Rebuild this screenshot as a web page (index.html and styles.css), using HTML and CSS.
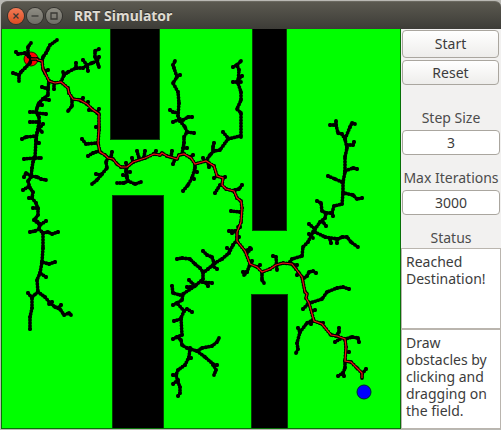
FILE: index.html
```html
<!DOCTYPE html>
<html lang="en">
<head>
<meta charset="utf-8">
<title>RRT Simulator</title>
<link rel="stylesheet" href="styles.css">
</head>
<body>
<div class="window">
  <header class="titlebar">
    <button class="control close" type="button" aria-label="Close"><svg viewBox="0 0 16 16"><path d="M5.5 5.5l5 5M10.5 5.5l-5 5"/></svg></button>
    <button class="control" type="button" aria-label="Minimize"><svg viewBox="0 0 16 16"><path d="M4.5 8h7"/></svg></button>
    <button class="control" type="button" aria-label="Maximize"><svg viewBox="0 0 16 16"><path d="M5 5h6v6H5z"/></svg></button>
    <h1 class="title">RRT Simulator</h1>
  </header>
  <main class="content">
    <svg class="field" viewBox="1 29 400 400" role="img" aria-label="Search tree on the field">
      <defs>
        <marker id="node" viewBox="0 0 4 4" refX="2" refY="2" markerWidth="4" markerHeight="4" markerUnits="userSpaceOnUse"><circle cx="2" cy="2" r="1.9"/></marker>
        <path id="tree" d="
          M42 61L43 57L46 53L48 49L50 45L57 40
          M31 59L28 54L28 47L31 43M16 52L18 54L25 53L31 59L30 63L25 68L21 72L19 75L19 81M13 73L19 75
          M61 82L64 75L63 72M64 75L68 72L76 68L83 68L87 65L92 63L97 61L95 57L95 51L99 49
          M76 63V68M83 60L87 65L88 71M99 57L97 61L99 67L98 64
          M48 70L44 71M54 89V83M42 87L48 89
          M49 81L48 88L48 95L43 99L39 103L37 108L36 112L39 117L39 123L37 133L36 140L35 157L33 162L32 168L31 177L28 181L30 188L33 192L32 198L36 203L38 209L38 215L35 219L40 224L39 229L43 233L43 248L42 262L40 273L37 280L38 292L32 297L32 308L30 317L30 329
          M49 100L43 99M30 112H36M46 114L37 113M42 105H38M72 99L72 106L68 111M83 98L81 101M88 102L87 104M99 109L97 113
          M30 122H39M43 124L39 129L42 132M22 139L26 137L36 136M39 143L36 141M24 159L34 158L41 158
          M24 177L26 173L31 176L37 177L41 179L46 180M23 190L28 187M29 198H32M33 208H38M46 221L40 225L34 220
          M30 232L35 231L39 229M58 232L52 234L48 232L43 233M55 262L49 264L42 262M46 277L40 273
          M28 293L32 298M38 292L45 297L50 303L55 307L60 309L64 315L69 313L71 315M52 302L49 304M61 305L58 308
          M82 139L86 144L97 143M88 156L93 153L99 151M96 127H99M89 110H92M112 152L111 157
          M108 158L106 162L107 168L102 174L97 180L92 184M96 174L101 175
          M126 163L127 167L126 170L127 178L128 181L124 183L117 183M128 181L135 184L141 182M130 172H126M123 175L127 176
          M132 158L133 162M137 151L139 158M145 151L144 157M156 151L154 154M172 151L171 157M173 164L175 159
          M182 154L184 143L184 137L187 132L185 127L180 121L178 116L179 103L178 92L173 83L177 77L174 68L173 65L175 61
          M180 75L177 76M170 110L173 112L178 113M173 122L180 119M192 117L188 117L183 120L180 121M194 133L187 132M187 148H183M193 155L190 157
          M206 161L210 155L214 151L220 150L228 139L240 136L241 137L241 113L237 109L241 100L241 92L238 83L239 70L237 65L241 61
          M233 67L237 65M242 76L238 80M233 82H241M223 132L228 138M214 143L213 147L213 151
          M203 158L205 161M209 167L208 162M195 164L195 168L192 178L188 185L183 191M197 172L195 171M194 179L192 178
          M215 193L220 185M225 177L223 178M214 178L217 176M242 185L239 189L235 190M231 211L240 212M229 231L236 231M232 233L236 231M240 227H238M239 237H237M250 248L246 251
          M237 240L233 245L229 253L222 259L215 263L208 269L203 273L203 279L195 286L183 294L182 300L177 303L184 311L181 318L182 335L177 337L181 340L182 345L187 348L197 351L202 348L212 346L217 342L219 338
          M197 351L205 357L213 364L216 370L214 375M217 365H213
          M190 348L189 357L185 365L178 370L176 375L178 382L180 387L180 393L178 396M178 380L173 384M173 375H176M191 358H189
          M203 251L207 255L212 257L214 263M177 259L182 258L190 259L195 264L200 268L203 272M217 269L213 266M227 248L230 250
          M212 283L202 282M208 286L206 283M189 280L193 284M187 287H191M172 286L173 293L180 295M173 305L177 303M192 312L187 309L184 311M174 321L181 319M173 339L177 337
          M251 249L247 253M252 261L250 264L247 272L244 275M243 272H247M262 272L262 280L264 283M260 265L258 267M273 256L276 257L277 270
          M290 262L292 259L302 256L303 247L308 242L313 232L320 222L325 218L326 213L332 213L334 206L342 204L343 193L343 182L345 172L345 157L347 148L345 139L350 127L352 123L355 124
          M345 139L342 134L338 133L336 125L330 125M336 125V121M354 142L353 145L347 145M357 169L353 168L345 171M328 176L335 179L342 182
          M362 198L357 199L353 195L344 193M317 201L321 203L322 211L326 213M333 216L332 213M326 226L323 222M309 224L315 229
          M315 232L325 237L338 239L342 237L347 237L351 242L358 247M331 243L330 239M337 243V239M309 234L313 238
          M297 265L293 265M297 275L299 273M316 273L313 271L309 272L307 276L303 279
          M349 289L343 287L337 288L327 292L322 299L310 303M303 309L308 304M315 310L312 311
          M313 320L307 323L300 332L297 343L298 349L296 353M298 328L300 332M323 323H320M311 324L312 321
          M339 328L339 332L336 336M335 342L340 339M359 342L358 338L352 337L345 339M349 352H346
          M345 361L345 368L343 373L338 376M344 376L343 373M366 369L362 374"/>
        <path id="route" d="M31 59L37 59L38 60L42 61L43 69L45 73L49 81L55 83L61 82L68 88L69 93L73 99L80 100L87 104L92 109L99 114L99 130L98 143L100 152L105 155L108 158L113 159L117 164L121 167L127 167L133 162L145 158L154 154L160 155L162 153L167 156L177 159L179 155L184 154L191 158L195 164L206 161L214 166L217 176L223 178L222 185L226 189L234 191L237 198L241 201L242 208L241 222L237 232L237 241L245 251L250 264L257 267L262 272L270 269L276 265L283 263L292 264L296 269L302 277L305 292L307 294L306 298L309 303L314 321L322 324L331 335L337 336L345 339L346 347L345 361L351 362L357 368L362 373L362 378"/>
      </defs>
      <rect class="ground" x="1" y="29" width="400" height="400"/>
      <g class="obstacles">
        <rect x="110.5" y="28.5" width="49" height="111"/>
        <rect x="112.5" y="195.5" width="51" height="234"/>
        <rect x="252.5" y="28.5" width="34" height="202"/>
        <rect x="251.5" y="294.5" width="36" height="135"/>
      </g>
      <rect class="edge" x="1.5" y="28.5" width="399" height="400"/>
      <circle class="start" cx="31" cy="59" r="7"/>
      <circle class="goal" cx="364" cy="392" r="7"/>
      <use href="#tree" class="branch"/>
      <use href="#tree" class="nodes"/>
      <use href="#route" class="branch"/>
      <use href="#route" class="nodes"/>
      <use href="#route" class="route"/>
    </svg>
    <form class="panel">
      <button class="action primary" type="button">Start</button>
      <button class="action" type="button">Reset</button>
      <label class="caption first" for="step">Step Size</label>
      <input class="entry" id="step" type="text" value="3">
      <label class="caption" for="iterations">Max Iterations</label>
      <input class="entry" id="iterations" type="text" value="3000">
      <label class="caption last" for="status">Status</label>
      <textarea class="message" id="status" readonly>Reached Destination!</textarea>
      <textarea class="message help" aria-label="Instructions" readonly>Draw obstacles by clicking and dragging on the field.</textarea>
    </form>
  </main>
</div>
</body>
</html>
```
FILE: styles.css
```css
* {
  box-sizing: border-box;
}

body {
  margin: 0;
  background: #b9b8b3;
  font: 14px/18px "Noto Sans", "Open Sans", sans-serif;
  color: #3c3c3c;
}

.window {
  padding: 1px 0 1px 1px;
}

.titlebar {
  display: flex;
  align-items: center;
  gap: 3px;
  height: 28px;
  padding: 0 7px;
  border-top: 1px solid #6b6960;
  border-radius: 6px 6px 0 0;
  background: linear-gradient(#5b5950, #3d3c37);
}

.control {
  width: 16px;
  height: 16px;
  padding: 0;
  border: 0;
  border-radius: 50%;
  background: linear-gradient(#8f8d84, #6f6d66);
  box-shadow: 0 0 0 1px #33322e;
}

.control.close {
  background: linear-gradient(#f37b56, #dd4c22);
}

.control svg {
  display: block;
  fill: none;
  stroke: #3a3935;
  stroke-width: 1.3;
}

.title {
  margin: 0 0 0 9px;
  font-size: 14px;
  font-weight: 700;
  color: #dfdbd2;
  text-shadow: 0 -1px #2d2c29;
}

.content {
  display: grid;
  grid-template-columns: 1fr 100px;
  background: #f2f1f0;
}

.field {
  display: block;
  width: 100%;
}

.ground {
  fill: #00ff00;
}

.obstacles rect {
  fill: #000000;
  stroke: #064006;
}

.edge {
  fill: none;
  stroke: #087008;
}

.start,
.goal {
  fill: #ff0000;
  stroke: #301000;
}

.goal {
  fill: #0000ff;
  stroke: #002030;
}

.branch {
  fill: none;
  stroke: #000000;
  stroke-width: 2.4;
  stroke-linecap: round;
  stroke-linejoin: round;
  marker: url(#node);
}

.nodes {
  fill: none;
  stroke: #000000;
  stroke-width: 3.8;
  stroke-linecap: round;
  stroke-dasharray: 0 3;
}

.route {
  fill: none;
  stroke: #ee1010;
  stroke-width: 1.2;
}

.panel {
  display: flex;
  flex-direction: column;
  padding-top: 1px;
}

.action,
.entry {
  height: 25px;
  margin: 0 2px 0 1px;
  padding: 0;
  border: 1px solid #aaa69f;
  border-radius: 4px;
  font: inherit;
  color: inherit;
  text-align: center;
}

.action {
  margin-bottom: 2px;
  background: linear-gradient(#ffffff, #eeedeb);
}

.action.primary {
  height: 28px;
}

.entry {
  min-width: 0;
  margin-right: 1px;
  background: #ffffff;
}

.caption {
  padding: 14px 0 3px;
  text-align: center;
  white-space: nowrap;
  color: #4c4c4c;
}

.caption.first {
  padding-top: 22px;
}

.caption.last {
  padding-bottom: 1px;
}

.message {
  height: 81px;
  padding: 4px 0 0 4px;
  border: 1px solid #bab5ae;
  outline: 0;
  resize: none;
  overflow: hidden;
  background: #ffffff;
  font: inherit;
  line-height: 17px;
  color: inherit;
}

.message.help {
  flex: 1;
}
```
